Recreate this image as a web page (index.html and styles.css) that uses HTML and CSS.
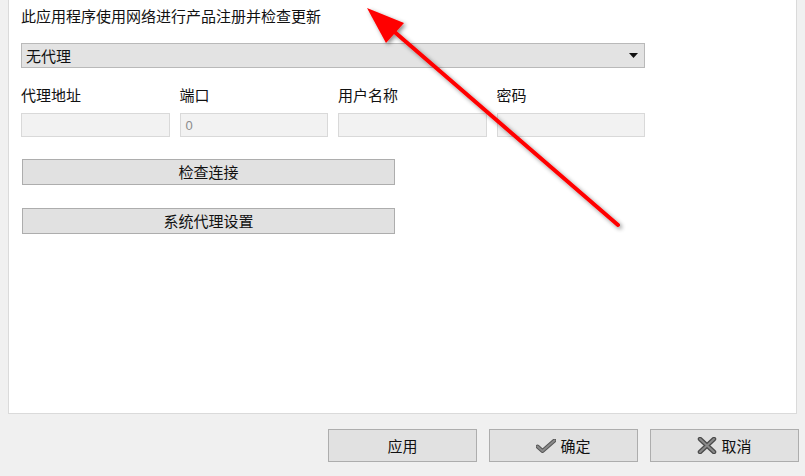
FILE: index.html
```html
<!DOCTYPE html>
<html lang="zh-CN">
<head>
<meta charset="utf-8">
<title>代理设置</title>
<link rel="stylesheet" href="styles.css">
</head>
<body>
<div class="panel">
  <div class="title">此应用程序使用网络进行产品注册并检查更新</div>
  <div class="combo">
    <span class="combo-text">无代理</span>
    <svg class="combo-arrow" width="9" height="5" viewBox="0 0 9 5"><path d="M0 0H9L4.5 5Z" fill="#111"/></svg>
  </div>
  <div class="fields">
    <label class="lbl">代理地址</label>
    <label class="lbl">端口</label>
    <label class="lbl">用户名称</label>
    <label class="lbl">密码</label>
    <div class="input"></div>
    <div class="input"><span class="ph">0</span></div>
    <div class="input"></div>
    <div class="input"></div>
  </div>
  <button class="wide-btn first">检查连接</button>
  <button class="wide-btn second">系统代理设置</button>
</div>
<div class="footer">
  <button class="dlg-btn">应用</button>
  <button class="dlg-btn">
    <svg class="ico" width="20" height="14" viewBox="0 0 20 14"><path d="M1.5 7.5 L6.5 12 L18.5 1.5" fill="none" stroke="#555" stroke-width="4" stroke-linejoin="round" stroke-linecap="round"/><path d="M1.5 7.5 L6.5 12 L18.5 1.5" fill="none" stroke="#8a8a8a" stroke-width="2" stroke-linejoin="round" stroke-linecap="round"/></svg>
    确定
  </button>
  <button class="dlg-btn">
    <svg class="ico" width="20" height="17" viewBox="0 0 20 17"><path d="M3 2 L17 15 M17 2 L3 15" fill="none" stroke="#4a4a4a" stroke-width="4.5" stroke-linecap="round"/><path d="M3 2 L17 15 M17 2 L3 15" fill="none" stroke="#8a8a8a" stroke-width="2" stroke-linecap="round"/></svg>
    取消
  </button>
</div>
<svg class="arrow" width="805" height="476" viewBox="0 0 805 476">
  <defs>
    <filter id="sh" x="-20%" y="-20%" width="140%" height="140%">
      <feDropShadow dx="2" dy="2" stdDeviation="2.2" flood-color="#000" flood-opacity="0.45"/>
    </filter>
  </defs>
  <g filter="url(#sh)">
    <line x1="618" y1="225" x2="390" y2="28" stroke="#ff0000" stroke-width="4" stroke-linecap="round"/>
    <path d="M367 8 L404 23 L386 43 Z" fill="#ff0000"/>
  </g>
</svg>
</body>
</html>
```

FILE: styles.css
```css
html, body {
  margin: 0;
  padding: 0;
}
body {
  width: 805px;
  height: 476px;
  background: #f0f0f0;
  font-family: "Noto Sans CJK SC", "Noto Sans", sans-serif;
  font-size: 15px;
  color: #111;
  position: relative;
  overflow: hidden;
}
.panel {
  margin-left: 8px;
  width: 789px;
  height: 414px;
  box-sizing: border-box;
  background: #fff;
  border: 1px solid #dadada;
  border-top: none;
  padding: 6px 0 0 12px;
}
.title {
  line-height: 20px;
  height: 20px;
}
.combo {
  margin-top: 17px;
  width: 624px;
  height: 25px;
  box-sizing: border-box;
  background: #e3e3e3;
  border: 1px solid #b9b9b9;
  display: flex;
  align-items: center;
  justify-content: space-between;
  padding: 0 6px 0 4px;
}
.combo-text {
  line-height: 20px;
}
.fields {
  margin-top: 17px;
  width: 624px;
  display: grid;
  grid-template-columns: repeat(4, 1fr);
  column-gap: 10px;
  row-gap: 8px;
}
.lbl {
  line-height: 20px;
  height: 20px;
}
.input {
  height: 24px;
  box-sizing: border-box;
  background: #f2f2f2;
  border: 1px solid #d9d9d9;
  display: flex;
  align-items: center;
  padding-left: 5px;
}
.ph {
  color: #8c8c8c;
  font-family: "Liberation Sans", sans-serif;
  font-size: 13px;
}
.wide-btn {
  display: block;
  margin-left: 1px;
  width: 373px;
  height: 26px;
  box-sizing: border-box;
  background: #e1e1e1;
  border: 1px solid #adadad;
  font-family: inherit;
  font-size: 15px;
  color: #111;
  padding: 0;
  line-height: 20px;
}
.wide-btn.first {
  margin-top: 22px;
}
.wide-btn.second {
  margin-top: 23px;
}
.footer {
  display: flex;
  justify-content: flex-end;
  gap: 12px;
  padding: 15px 6px 0 0;
}
.dlg-btn {
  width: 149px;
  height: 33px;
  box-sizing: border-box;
  background: #e1e1e1;
  border: 1px solid #adadad;
  font-family: inherit;
  font-size: 15px;
  color: #111;
  padding: 0;
  display: flex;
  align-items: center;
  justify-content: center;
  gap: 4px;
}
.ico {
  display: block;
}
.arrow {
  position: absolute;
  left: 0;
  top: 0;
  pointer-events: none;
}
```
